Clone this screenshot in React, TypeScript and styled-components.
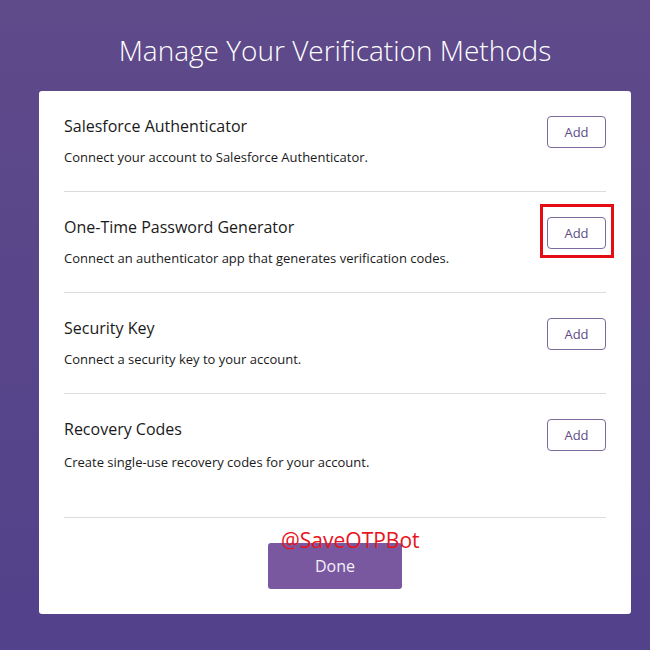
import styled, { createGlobalStyle } from "styled-components";

const GlobalStyle = createGlobalStyle`
  html, body {
    margin: 0;
    padding: 0;
  }
  body {
    font-family: "Open Sans", "Liberation Sans", sans-serif;
  }
`;

const methods = [
  {
    title: "Salesforce Authenticator",
    text: "Connect your account to Salesforce Authenticator.",
  },
  {
    title: "One-Time Password Generator",
    text: "Connect an authenticator app that generates verification codes.",
    marked: true,
  },
  {
    title: "Security Key",
    text: "Connect a security key to your account.",
  },
  {
    title: "Recovery Codes",
    text: "Create single-use recovery codes for your account.",
  },
];

function App() {
  return (
    <Page>
      <GlobalStyle />
      <Heading>Manage Your Verification Methods</Heading>
      <Card>
        {methods.map((m, i) => (
          <Row key={m.title} $last={i === methods.length - 1}>
            <Info $last={i === methods.length - 1}>
              <MethodTitle>{m.title}</MethodTitle>
              <MethodText>{m.text}</MethodText>
            </Info>
            <AddWrap $marked={!!m.marked}>
              <AddButton>Add</AddButton>
            </AddWrap>
          </Row>
        ))}
        <Footer>
          <DoneButton>Done</DoneButton>
          <Watermark>@SaveOTPBot</Watermark>
        </Footer>
      </Card>
    </Page>
  );
}

export default App;

const Page = styled.div`
  width: 650px;
  height: 650px;
  box-sizing: border-box;
  padding: 30px 0 0 20px;
  background: linear-gradient(180deg, #5f4a8a 0%, #57458a 60%, #52418b 100%);
  display: flex;
  flex-direction: column;
  align-items: center;
`;

const Heading = styled.h1`
  margin: 0;
  height: 40px;
  line-height: 40px;
  color: #ffffff;
  font-weight: 300;
  font-size: 28px;
`;

const Card = styled.div`
  margin-top: 21px;
  width: 592px;
  height: 523px;
  box-sizing: border-box;
  background: #ffffff;
  border-radius: 3px;
  padding: 0 25px;
  display: flex;
  flex-direction: column;
`;

const Row = styled.div<{ $last: boolean }>`
  display: flex;
  justify-content: space-between;
  align-items: flex-start;
  padding: 25px 0 ${(p) => (p.$last ? "46px" : "25px")};
  border-bottom: 1px solid #dddbe0;
`;

const Info = styled.div<{ $last: boolean }>`
  display: flex;
  flex-direction: column;
  gap: ${(p) => (p.$last ? "14px" : "12px")};
`;

const MethodTitle = styled.div`
  font-size: 16px;
  line-height: 20px;
  color: #1a1a1a;
`;

const MethodText = styled.div`
  font-size: 13px;
  line-height: 18px;
  color: #1a1a1a;
`;

const AddWrap = styled.div<{ $marked: boolean }>`
  margin: -13px -8px -9px 0;
  padding: 10px 5px 6px 4px;
  border: 3px solid ${(p) => (p.$marked ? "#e50d14" : "transparent")};
`;

const AddButton = styled.button`
  display: block;
  width: 59px;
  height: 32px;
  background: #ffffff;
  border: 1px solid #7a6a9e;
  border-radius: 4px;
  color: #5d4c86;
  font-family: "Open Sans", "Liberation Sans", sans-serif;
  font-size: 13px;
  padding: 0;
`;

const Footer = styled.div`
  position: relative;
  display: flex;
  justify-content: center;
  padding-top: 25px;
`;

const DoneButton = styled.button`
  width: 134px;
  height: 46px;
  background: #7a58a0;
  border: none;
  border-radius: 3px;
  color: #f4f0f8;
  font-family: "Open Sans", "Liberation Sans", sans-serif;
  font-size: 16px;
  padding: 0;
`;

const Watermark = styled.div`
  position: absolute;
  left: 217px;
  top: 9px;
  color: #e8141c;
  font-size: 21px;
  line-height: 26px;
`;
